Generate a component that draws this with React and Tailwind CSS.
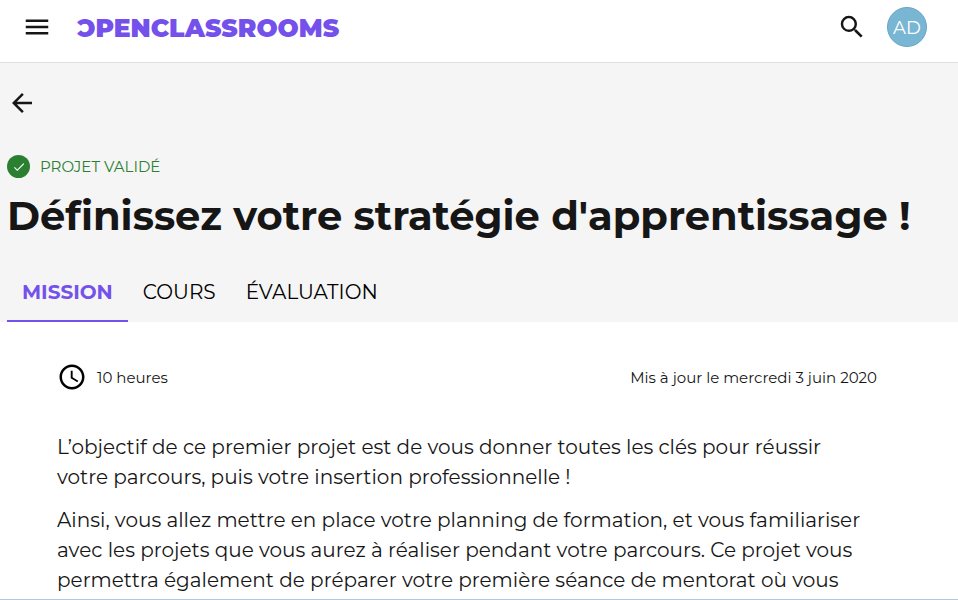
import { MdMenu, MdSearch, MdArrowBack, MdAccessTime, MdCheck } from "react-icons/md";

const tabs = ["Cours", "Évaluation"];

export default function App() {
  return (
    <div className="h-screen overflow-hidden border-b border-[#b4c8dc] bg-white font-['Montserrat',Inter,sans-serif] text-[#161616]">
      <header className="flex h-[63px] items-center border-b border-[#e0e0e0] pr-[31px] pb-2 pl-[22px]">
        <button type="button" aria-label="Menu">
          <MdMenu className="size-[30px]" />
        </button>
        <a href="#accueil" aria-label="OpenClassrooms" className="ml-[25px] pt-0.5 text-[25px] leading-8 font-black text-[#7451eb]">
          <span>ƆPENCLASSROOMS</span>
        </a>
        <button type="button" aria-label="Rechercher" className="ml-auto">
          <MdSearch className="size-[30px]" />
        </button>
        <button type="button" className="ml-5 size-10 rounded-full border border-[#6ba6c2] bg-[#78b6d3] pt-[3px] text-[18px] text-white">
          AD
        </button>
      </header>

      <section className="bg-[#f5f5f5] px-[7px] pt-[25px]">
        <button type="button" aria-label="Retour" className="block">
          <MdArrowBack className="size-[30px]" />
        </button>
        <p className="mt-[37px] flex items-center gap-[10px] text-[15px] leading-[23px] text-[#2b7f30] uppercase">
          <span className="flex size-[23px] items-center justify-center rounded-full bg-[#2b7f30]">
            <MdCheck className="size-3.5 text-white" />
          </span>
          Projet validé
        </p>
        <h1 className="mt-3 text-[40px] leading-[52px] font-bold whitespace-nowrap [font-variant-ligatures:none]">
          Définissez votre stratégie d'apprentissage !
        </h1>
        <nav className="mt-5 flex text-[20px] leading-[30px] uppercase">
          <a href="#mission" className="border-b-2 border-[#7451eb] px-[15px] pt-[15px] pb-[13px] font-bold text-[#7451eb]">
            Mission
          </a>
          {tabs.map((tab) => (
            <a key={tab} href="#onglet" className="px-[15px] pt-[15px] pb-[13px] text-black">
              {tab}
            </a>
          ))}
        </nav>
      </section>

      <main className="pt-10 pr-[81px] pl-[57px]">
        <div className="flex items-start justify-between text-[15px] leading-[30px]">
          <p className="flex items-start gap-[10px]">
            <MdAccessTime className="size-[30px] text-black" />
            <span className="pt-px">10 heures</span>
          </p>
          <p className="pt-px">Mis à jour le mercredi 3 juin 2020</p>
        </div>
        <div className="mt-[39px] text-[20px] leading-[30px]">
          <p className="mb-[13px]">
            L’objectif de ce premier projet est de vous donner toutes les clés pour réussir
            <br />
            votre parcours, puis votre insertion professionnelle !
          </p>
          <p>
            Ainsi, vous allez mettre en place votre planning de formation, et vous familiariser
            <br />
            avec les projets que vous aurez à réaliser pendant votre parcours. Ce projet vous
            <br />
            permettra également de préparer votre première séance de mentorat où vous
          </p>
        </div>
      </main>
    </div>
  );
}
